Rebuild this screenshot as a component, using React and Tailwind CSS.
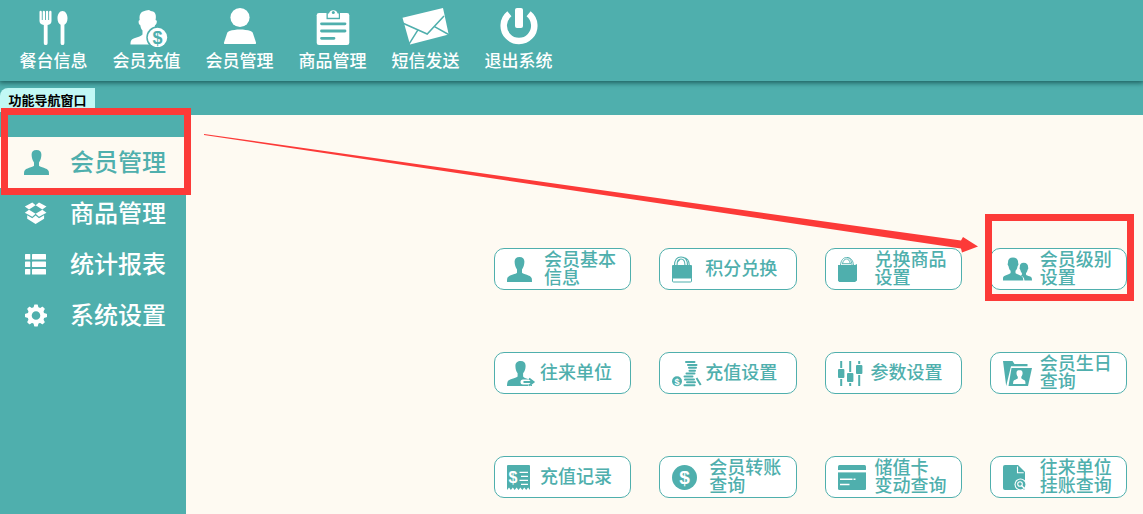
const toolbar = [
  { label: '餐台信息', icon: TableIcon },
  { label: '会员充值', icon: RechargeIcon },
  { label: '会员管理', icon: MemberIcon },
  { label: '商品管理', icon: ClipboardIcon },
  { label: '短信发送', icon: MailIcon },
  { label: '退出系统', icon: PowerIcon },
]

const menu = [
  { label: '会员管理', icon: PersonIcon, active: true },
  { label: '商品管理', icon: BoxIcon },
  { label: '统计报表', icon: ReportIcon },
  { label: '系统设置', icon: GearIcon },
]

const actions = [
  { lines: ['会员基本', '信息'], icon: PersonIcon },
  { lines: ['积分兑换'], icon: LockBagIcon },
  { lines: ['兑换商品', '设置'], icon: BagIcon },
  { lines: ['会员级别', '设置'], icon: PeopleIcon, marked: true },
  { lines: ['往来单位'], icon: PersonArrowIcon },
  { lines: ['充值设置'], icon: CoinsIcon },
  { lines: ['参数设置'], icon: SlidersIcon },
  { lines: ['会员生日', '查询'], icon: FolderIcon },
  { lines: ['充值记录'], icon: ReceiptIcon },
  { lines: ['会员转账', '查询'], icon: DollarIcon },
  { lines: ['储值卡', '变动查询'], icon: CardIcon },
  { lines: ['往来单位', '挂账查询'], icon: DocSearchIcon },
]

/* Toolbar icons, 56 x 40 */

function ToolSvg({ children }) {
  return (
    <svg className="h-10 w-14" viewBox="0 0 56 40" fill="currentColor" aria-hidden="true">
      {children}
    </svg>
  )
}

function TableIcon() {
  return (
    <ToolSvg>
      <path d="M13.500 5a1 1 0 0 1 2.300 0v8h.9V5a1 1 0 0 1 2.300 0v8h.9V5a1 1 0 0 1 2.300 0v8h.9V5a1 1 0 0 1 2.400 0v9c0 2.500-1.300 3.600-3.900 4v18.200a1.900 1.900 0 0 1-3.800 0V18c-2.600-.4-4.300-1.500-4.300-4z" />
      <path d="M36.500 4c3 0 5 3.300 5 7.200 0 3.400-1.300 5.600-3.100 6.600v18.400a1.900 1.900 0 0 1-3.800 0V17.800c-1.800-1-3.100-3.200-3.100-6.600 0-3.900 2-7.200 5-7.200z" />
    </ToolSvg>
  )
}

function RechargeIcon() {
  return (
    <ToolSvg>
      <path d="M11.500 37.500c0-4 .8-5.200 4.500-6.500 3-1.100 6.500-2 7.500-3.500v-4c-1.200-1.500-1.900-3-2.200-5.300-1.400-.7-2-2.700-1.600-4.500l1-.7c-.6-4 .3-7.300 3.300-8.500 2-.8 4-1.300 6-1.500 1 1 2.500.9 4 1.500 2.900 1.200 3.300 4.500 2.600 8.500l1.200.7c.2 1.800-.4 3.800-1.800 4.500-.2 2.300-1 3.800-2.200 5.300v4l2 10z" />
      <circle cx="38.500" cy="30.500" r="11.200" className="fill-[#4fafad]" />
      <circle cx="38.500" cy="30.500" r="9.700" />
      <text x="38.500" y="36.500" textAnchor="middle" fontSize="18" fontWeight="700" className="fill-[#4fafad] font-['Liberation_Sans',sans-serif]">
        $
      </text>
    </ToolSvg>
  )
}

function MemberIcon() {
  return (
    <ToolSvg>
      <circle cx="28" cy="10.500" r="9.600" />
      <path d="M17.500 24c6-2 15-2 21 0 1.500.5 2 1 2.500 2.500l3 9c.3 1-.2 1.500-1 1.500H13c-.8 0-1.300-.5-1-1.500l3-9c.5-1.500 1-2 2.500-2.500z" />
    </ToolSvg>
  )
}

function ClipboardIcon() {
  return (
    <ToolSvg>
      <path d="M14 6h28a2.300 2.300 0 0 1 2.300 2.300v27.400A2.300 2.300 0 0 1 42 38H14a2.300 2.300 0 0 1-2.300-2.300V8.300A2.300 2.300 0 0 1 14 6z" />
      <path d="M21.500 5h13.500v7.200H21.500z" className="fill-[#4fafad]" />
      <path d="M22.800 6.500h1.200a4.500 4.500 0 0 1 8.600 0h1.200v4.300H22.800z" />
      <circle cx="28.300" cy="5.500" r="1.500" className="fill-[#4fafad]" />
      <path d="M16.500 16.800h23.500M16.500 24h23.500M16.500 31.300h12.500" className="stroke-[#4fafad]" strokeWidth="2.800" strokeLinecap="round" />
    </ToolSvg>
  )
}

function MailIcon() {
  return (
    <ToolSvg>
      <path d="M4.500 10.700 45 1l5.700 26.500L12 37.500z" />
      <path d="m4.500 16 24.700 11L46 9M19.800 23.200 11 37.200M36.500 19.700l15 8.300" fill="none" className="stroke-[#4fafad]" strokeWidth="1.500" />
    </ToolSvg>
  )
}

function PowerIcon() {
  return (
    <ToolSvg>
      <path d="M18.400 6.800a15.300 15.300 0 1 0 19.200 0" fill="none" stroke="currentColor" strokeWidth="6.500" />
      <rect x="24" y="1" width="8" height="20" rx="2" />
    </ToolSvg>
  )
}

/* Menu and button icons, 29 x 25 */

function SmallSvg({ children }) {
  return (
    <svg
      className="h-[25px] w-[29px] shrink-0 overflow-visible"
      viewBox="0 0 29 25"
      fill="currentColor"
      aria-hidden="true"
    >
      {children}
    </svg>
  )
}

function PersonIcon() {
  return (
    <SmallSvg>
      <path d="M12.500 0c-3.300 0-5 1.800-4.900 4.800.1 3 .9 5.700 2.400 7.700v3.300C9 17.300 1.400 18 .4 21 0 22 0 23.500 0 25h25c0-1.500 0-3-.4-4-1-3-8.600-3.700-9.600-5.200v-3.300c1.500-2 2.300-4.700 2.400-7.700.1-3-1.600-4.800-4.900-4.800z" />
    </SmallSvg>
  )
}

function BoxIcon() {
  return (
    <SmallSvg>
      <path d="m8.300 1.500 3.300 2.800L5 8.400.8 5.500zM15 1.500l-3.400 2.800 6.700 4.100 4.200-2.900zM5 8.700l6.600 4.100-3.300 2.900-7.500-4zM18.300 8.700l-6.700 4.100 3.400 2.900 7.500-4zM3.200 14.300l5.100 2.900 3.300-2.700 3.400 2.700 5.100-2.900v3.400L11.600 23 3.200 17.700z" />
    </SmallSvg>
  )
}

function ReportIcon() {
  return (
    <SmallSvg>
      <rect x="1" y="2" width="5.300" height="5.500" rx=".6" />
      <rect x="8" y="2" width="14" height="5.500" rx=".6" />
      <rect x="1" y="9.500" width="5.300" height="5.500" rx=".6" />
      <rect x="8" y="9.500" width="14" height="5.500" rx=".6" />
      <rect x="1" y="17" width="5.300" height="5.500" rx=".6" />
      <rect x="8" y="17" width="14" height="5.500" rx=".6" />
    </SmallSvg>
  )
}

function GearIcon() {
  return (
    <SmallSvg>
      <circle cx="12" cy="12.500" r="6.400" fill="none" stroke="currentColor" strokeWidth="4.200" />
      {[0, 45, 90, 135, 180, 225, 270, 315].map((angle) => (
        <path key={angle} d="M9.300 5.500 10.200 2c.1-.4.4-.5.700-.5h2.200c.3 0 .6.1.7.5l.9 3.500z" transform={`rotate(${angle} 12 12.5)`} />
      ))}
    </SmallSvg>
  )
}

function LockBagIcon() {
  return (
    <SmallSvg>
      <path d="M2.500 8.500C2.500 2.500 5 0 9 0s6.500 2.500 6.500 8.500M5 8.500C5 3.500 6.500 2 9 2s4 1.500 4 6.500M11 .5c4 .3 6.300 3 6.300 8M5.500 5 8 2.300" fill="none" stroke="currentColor" strokeWidth="1.100" />
      <path d="M1 8h18a1 1 0 0 1 1 1v12.500H0V9a1 1 0 0 1 1-1z" />
      <rect x=".5" y="20.500" width="19" height="4.500" rx="1" fill="none" stroke="currentColor" strokeWidth="1" />
    </SmallSvg>
  )
}

function BagIcon() {
  return (
    <SmallSvg>
      <path d="M2.500 8C3 3 5.500.5 8.500.5S13.500 3 14 8M4.500 6.500C5.300 3.500 6.500 2 8.500 2s3 1.500 3.800 4.500M9 .5c4 0 6 3 6.500 7.500M4 6.700h9" fill="none" stroke="currentColor" strokeWidth=".9" />
      <path d="M0 8h17l2-1v16.500L17 25H1.200L0 23.800z" />
    </SmallSvg>
  )
}

function PeopleIcon() {
  return (
    <SmallSvg>
      <path d="M10 .5C6.500.5 4.900 2.500 5 5.500l-.4 2 1 2c.3 2 .9 3.300 2 4.300V16c-1 1.500-6.900 2-7.600 4.800L0 23.500h20.300l-.4-2.700C19.200 18 13.500 17.500 12.500 16v-2.200c1.100-1 1.700-2.300 2-4.300l1-2-.4-2C15.200 2.500 13.500.5 10 .5z" />
      <path d="M20.700 5.800c-2.900 0-4 1.700-3.900 4.200l-.3 1.500.9 1.500c.2 1.500.8 2.300 1.500 3v1.700l-1.100.8c2 .9 3.400 2 3.700 5H29c0-2.700-.5-3.500-2.500-4.200-1.500-.5-3-.8-3.500-1.800V16c.7-.7 1.300-1.500 1.500-3l.8-1.500-.2-1.500c0-2.500-1.500-4.200-4.400-4.200z" />
    </SmallSvg>
  )
}

function PersonArrowIcon() {
  return (
    <SmallSvg>
      <path d="M13.700 0C10.500 0 8.300 2 8.400 5c.1 3 .7 5.500 2.200 7.200v3.200C9.500 17.200 1.500 17.500.5 21 .1 22.200 0 23.500 0 25h25c0-5-.4-5.500-4-7-2-.8-4.400-1.500-4.900-2.600v-3.200c1.700-1.700 2.400-4.200 2.500-7.200C18.700 2 16.900 0 13.700 0z" />
      <path d="M16 18.500h5.500V16l7 5-7 5v-2.500H16a2.500 2.500 0 0 1 0-5z" className="fill-white" />
      <path d="M16.500 21H25M22 17.500l4.500 3.500-4.500 3.500" fill="none" stroke="currentColor" strokeWidth="2" />
    </SmallSvg>
  )
}

function CoinsIcon() {
  return (
    <SmallSvg>
      <circle cx="5" cy="20.200" r="5" />
      <text x="5" y="23.500" textAnchor="middle" fontSize="9" fontWeight="700" className="fill-white font-['Liberation_Sans',sans-serif]">
        $
      </text>
      <path d="M14 1h8.500M16 3.900h8.500M17 6.800h7M17.500 9.700h5.500M14.500 12.600h8M12.500 15.500h8M13 18.400h9M15 21.300h8M12.500 24.200h10" fill="none" stroke="currentColor" strokeWidth="2" strokeLinecap="round" />
      <path d="m24.500 17 4.200 7" stroke="currentColor" strokeWidth="2" />
    </SmallSvg>
  )
}

function SlidersIcon() {
  return (
    <SmallSvg>
      <path d="M3.200 0v7M3.200 18v7M12.200 0v11M12.200 22v3M21.200 0v3M21.200 14v11" stroke="currentColor" strokeWidth="2" />
      <rect x="0" y="8" width="6.400" height="9" rx="1" />
      <rect x="9" y="12" width="6.400" height="9" rx="1" />
      <rect x="18" y="4" width="6.400" height="9" rx="1" />
    </SmallSvg>
  )
}

function FolderIcon() {
  return (
    <SmallSvg>
      <path d="M0 0h9.500l2 3H24.500v2.300H8L3.200 25z" />
      <path d="M8.500 7H29l-4 18H5.500z" />
      <path d="M16.500 9c-2 0-3 1.200-3 3 0 1.600.5 2.800 1.300 3.700v1.500c-.8 1.300-4 1.300-4.500 3.300l-.3 2.500h12.500l-.2-2.500c-.5-2-3.200-2-4-3.300v-1.500c.8-.9 1.300-2.100 1.300-3.700 0-1.800-1-3-3.100-3z" className="fill-white" />
    </SmallSvg>
  )
}

function ReceiptIcon() {
  return (
    <SmallSvg>
      <path d="M1 0h21a1 1 0 0 1 1 1v24l-1.900-2.500L19.200 25l-1.900-2.500-2 2.500-1.900-2.500-1.900 2.500-1.900-2.500L7.700 25l-1.900-2.500L3.900 25 2 22.500 0 25V1a1 1 0 0 1 1-1z" />
      <text x="5.900" y="18" textAnchor="middle" fontSize="16" fontWeight="700" className="fill-white font-['Liberation_Sans',sans-serif]">
        $
      </text>
      <path d="M12.500 7.300h8.500M14 11.300h7M12.500 15.300h8.500M14 19.300h7" className="stroke-white" strokeWidth="1.300" />
    </SmallSvg>
  )
}

function DollarIcon() {
  return (
    <SmallSvg>
      <circle cx="12.500" cy="12.500" r="12.500" />
      <text x="12.500" y="19" textAnchor="middle" fontSize="19" fontWeight="700" className="fill-white font-['Liberation_Sans',sans-serif]">
        $
      </text>
    </SmallSvg>
  )
}

function CardIcon() {
  return (
    <SmallSvg>
      <rect width="28" height="25" rx="1.500" />
      <path d="M0 6.200h28" className="stroke-white" strokeWidth="2.400" />
      <path d="M2 14.300h12.500M15.500 14.300h2M2 19.500h9.500" className="stroke-white" strokeWidth="1.600" />
    </SmallSvg>
  )
}

function DocSearchIcon() {
  return (
    <SmallSvg>
      <path d="M2 0h13l7 7v16a2 2 0 0 1-2 2H2a2 2 0 0 1-2-2V2a2 2 0 0 1 2-2z" />
      <path d="M14.500 1.500v6.200h6.200" fill="none" className="stroke-white" strokeWidth="1.100" />
      <circle cx="17.500" cy="19.500" r="6" className="fill-white" />
      <circle cx="17.500" cy="19.500" r="4.900" />
      <circle cx="17" cy="19" r="2.300" fill="none" className="stroke-white" strokeWidth="1.100" />
      <path d="m18.500 20.500 2.500 2.500" className="stroke-white" strokeWidth="1.200" />
    </SmallSvg>
  )
}

function Arrow() {
  return (
    <svg
      className="pointer-events-none absolute top-[18px] right-[165px] h-[121px] w-[774px] fill-[#fc3a38]"
      viewBox="0 0 774 121"
      aria-hidden="true"
    >
      <path d="M0 1 606 86.500 757 107.500 759 104 774 113.500 758 119.500 757 115.500 606 93 0 2z" />
    </svg>
  )
}

export default function App() {
  return (
    <div className="flex min-h-screen flex-col bg-[#4fafad] font-['Liberation_Sans','Noto_Sans_CJK_SC',sans-serif] font-medium">
      <header className="relative flex px-[7px] pt-[7px] pb-1 text-white shadow-[0_1px_5px_1px_#1d5f5e]">
        {toolbar.map(({ label, icon: Icon }) => (
          <button key={label} type="button" className="flex w-[93px] flex-col items-center">
            <Icon />
            <span className="text-[17px] leading-[30px]">{label}</span>
          </button>
        ))}
      </header>

      <div className="flex h-[34px] items-start pt-[7px]">
        <button type="button" className="h-6 w-[95px] rounded-tl-lg bg-[#c1f8f5] pt-0.5 text-[13px] font-bold text-black">
          功能导航窗口
        </button>
      </div>

      <div className="flex flex-1">
        <nav className="relative z-10 w-[186px] shrink-0 pt-[22px]">
          {menu.map(({ label, icon: Icon, active }) => (
            <a
              key={label}
              href="#"
              className={`flex h-[51px] items-center gap-[17px] pl-6 text-2xl ${
                active ? 'bg-[#fefaf2] text-[#4fafad]' : 'text-white'
              }`}
            >
              <Icon />
              {label}
            </a>
          ))}
          <div className="pointer-events-none absolute -top-[7px] left-px h-[87px] w-[190px] border-[7px] border-[#fc3a38]" />
        </nav>

        <main className="relative flex-1 bg-[#fefaf2] pt-[133px] pr-4 pb-4">
          <div className="ml-auto grid w-[633px] grid-cols-4 gap-x-7 gap-y-[62px]">
            {actions.map(({ lines, icon: Icon, marked }) => (
              <div key={lines.join('')} className="relative">
                <button
                  type="button"
                  className={`flex h-[42px] w-full items-center rounded-[10px] border border-[#4fafad] bg-white pl-3 text-left text-lg/[18px] text-[#4fafad] ${
                    lines.length > 1 ? 'gap-2' : 'gap-1'
                  }`}
                >
                  <Icon />
                  <span className="whitespace-nowrap">
                    {lines.map((line) => (
                      <span key={line} className="block">
                        {line}
                      </span>
                    ))}
                  </span>
                </button>
                {marked && (
                  <div className="pointer-events-none absolute -top-[34px] -right-[7px] h-[87px] w-[149px] border-[7px] border-[#fc3a38]" />
                )}
              </div>
            ))}
          </div>
          <Arrow />
        </main>
      </div>
    </div>
  )
}
